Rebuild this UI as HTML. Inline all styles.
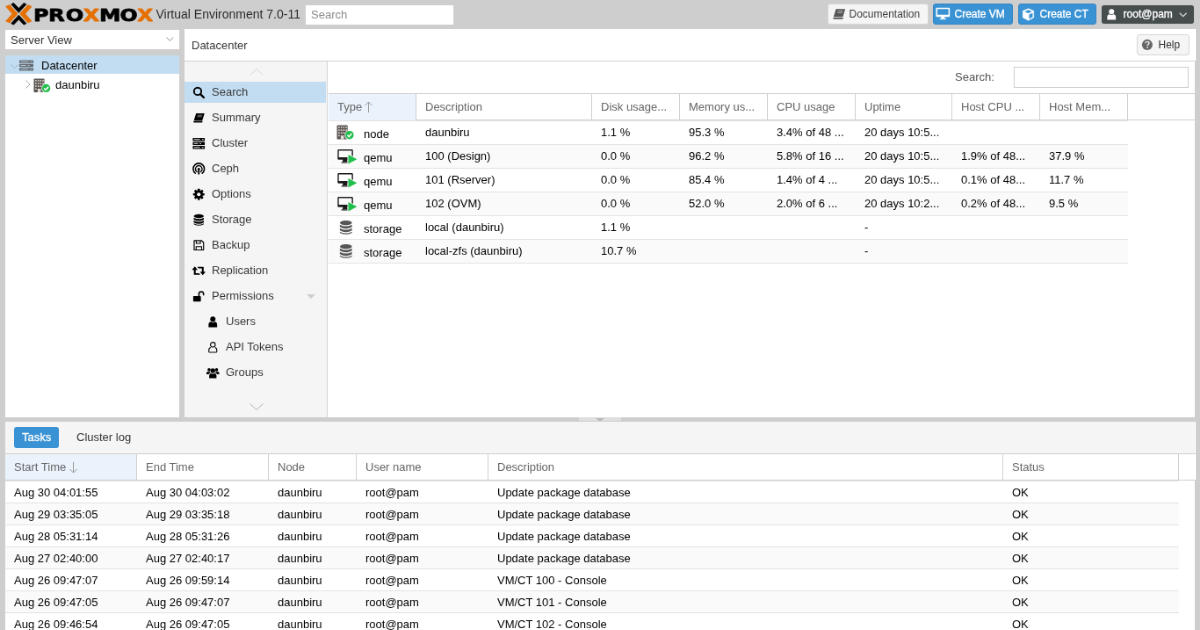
<!DOCTYPE html>
<html lang="en">
<head>
<meta charset="utf-8">
<title>daunbiru - Proxmox Virtual Environment</title>
<style>
*{box-sizing:border-box;margin:0;padding:0}
html,body{width:1200px;height:630px;overflow:hidden;background:#cecece}
body{font-family:"Liberation Sans",Arial,Helvetica,sans-serif;font-size:13px;color:#000}
#root{position:absolute;left:0;top:0;width:1366px;height:718px;transform:scale(0.87848);transform-origin:0 0;will-change:transform}
.abs{position:absolute}
svg{display:block;overflow:visible}
svg.ic{position:absolute}
#ver{left:177.5px;top:7px;font-size:14px;line-height:18px;color:#2b2b2b;white-space:nowrap}
#gsearch{left:347px;top:4.5px;width:170px;height:24px;border:1px solid #cfcfcf;background:#fff;color:#8a8a8a;line-height:22px;padding-left:6px}
.btn{position:absolute;top:4px;height:24px;border-radius:3px;border:1px solid #d8d8d8;background:#f5f5f5;color:#404040;line-height:22px;white-space:nowrap;font-size:12px}
.btn .ic{left:3.5px;top:2.5px}
.btn .tx{position:absolute;left:23.5px;top:0}
.btn.blue{background:#3892d4;border-color:#3586c4;color:#fff;-webkit-text-stroke:0.35px #fff}
.btn.dark{background:#464d4d;border-color:#c9caca;color:#fff;background-clip:padding-box;-webkit-text-stroke:0.35px #fff}
#viewsel{left:5px;top:33px;width:200px;height:24px;border:1px solid #cfcfcf;background:#fff;line-height:23px;padding-left:6px;color:#333}
#tree{left:5px;top:62px;width:200px;height:413.5px;border:1px solid #cfcfcf;background:#fff}
.trow{position:absolute;left:0;width:198px;height:21px;line-height:23px;white-space:nowrap}
.trow.sel{background:#c2ddf2}
.trow .tx{position:absolute;top:0}
#chead{left:210px;top:33px;width:1151px;height:36px;background:#fff;line-height:37px;padding-left:8px;color:#3a3a3a}
#cbody{left:209px;top:69px;width:1152px;height:406.5px;background:#fff;border:1px solid #cfcfcf}
#nav{left:0;top:0;width:163px;height:404.5px;background:#f5f5f5;border-right:1px solid #d6d6d6}
.nitem{position:absolute;left:0;width:161px;height:24px;line-height:24px;color:#3a3a3a;white-space:nowrap}
.nitem.sel{background:#c2ddf2}
.nitem .tx{position:absolute;left:31px;top:0}
.nitem.sub .tx{left:47px}
.nitem .ic{left:8.6px;top:5px}
.nitem.sub .ic{left:24.6px}
#ctb{left:164px;top:0;width:986px;height:36px;background:#fff}
.gh{position:absolute;height:30px;line-height:29px;color:#666;border-right:1px solid #d0d0d0;padding-left:10px;white-space:nowrap;overflow:hidden}
.gh.sorted{background:#eaf3fb}
.grow{position:absolute;left:0;height:27px;border-top:1px solid #e4e4e4;background:#fff}
.grow.last{border-bottom:1px solid #e4e4e4}
.grow.alt{background:#fafafa}
.gc{position:absolute;top:0;line-height:25px;white-space:nowrap}
#south{left:5px;top:479px;width:1356px;height:240px;background:#fff;border:1px solid #cfcfcf}
#stabs{left:0;top:0;width:1356px;height:36px;background:#f5f5f5}
.tab{position:absolute;top:6px;height:24px;line-height:24px;border-radius:3px;padding:0 9px;color:#333}
.tab.act{background:#3892d4;color:#fff;-webkit-text-stroke:0.3px #fff}
.sh{position:absolute;top:36px;height:31px;line-height:30px;color:#666;border-right:1px solid #d0d0d0;border-top:1px solid #d0d0d0;border-bottom:1px solid #d0d0d0;padding-left:10px;white-space:nowrap;background:#fff}
.sh.sorted{background:#eaf3fb}
.srow{position:absolute;left:0;width:1336px;height:25px;border-top:1px solid #e4e4e4;background:#fff}
.srow.alt{background:#fafafa}
.sc{position:absolute;top:0;line-height:25px;white-space:nowrap}
</style>
</head>
<body>
<div id="root">
<svg class="abs" style="left:0;top:0" width="227.67" height="34.15" viewBox="0 0 200 30">
<g fill="#e57000" stroke="#e57000" stroke-width="1" stroke-linejoin="round"><path d="M6.2 6.6L9.4 5.1L17.3 13.8L9.4 22.5L6.2 21L12.6 13.8Z"/><path d="M31.2 6.6L28 5.1L20.1 13.8L28 22.5L31.2 21L24.8 13.8Z"/></g>
<g fill="#000" stroke="#000" stroke-width="0.8" stroke-linejoin="round"><path d="M11.2 4.3L13.6 3L18.7 8.4L23.8 3L26.2 4.3L18.7 12.6Z"/><path d="M11.2 23.4L13.6 24.7L18.7 19.3L23.8 24.7L26.2 23.4L18.7 15.1Z"/></g>
<g font-family="'DejaVu Sans','Liberation Sans',sans-serif" font-weight="bold" font-size="17.6" stroke-width="0.7" stroke-linejoin="round"><text transform="translate(35.20,21) scale(1.192,1)" x="-1.58" y="0" fill="#000" stroke="#000">P</text><text transform="translate(50.20,21) scale(1.214,1)" x="-1.58" y="0" fill="#000" stroke="#000">R</text><text transform="translate(66.50,21) scale(1.204,1)" x="-0.70" y="0" fill="#000" stroke="#000">O</text><text transform="translate(83.50,21) scale(1.189,1)" x="-0.18" y="0" fill="#e57000" stroke="#e57000">X</text><text transform="translate(101.20,21) scale(1.226,1)" x="-1.58" y="0" fill="#000" stroke="#000">M</text><text transform="translate(120.80,21) scale(1.181,1)" x="-0.70" y="0" fill="#000" stroke="#000">O</text><text transform="translate(137.50,21) scale(1.159,1)" x="-0.18" y="0" fill="#e57000" stroke="#e57000">X</text></g>
</svg><div id="ver" class="abs">Virtual Environment 7.0-11</div>
<div id="gsearch" class="abs">Search</div>
<div class="btn" style="left:942px;width:115px"><svg class="ic" style="" width="16" height="16" viewBox="0 0 16 16"><path d="M4.6 2.2H15.2L12.4 11.2H1.8Z M3.2 11.9H12.9L12.3 13.8H2.2Q0.8 13.6 1.2 12.2Z" fill="#555"/><path d="M6.6 4.6H12.4M6 6.4H11.8" stroke="#f5f5f5" stroke-width="0.55"/></svg><span class="tx">Documentation</span></div>
<div class="btn blue" style="left:1062px;width:91px"><svg class="ic" style="left:2.2px;top:1.8px" width="16.6" height="16.6" viewBox="0 0 16 16"><path d="M1.2 1.8H14.8Q15.6 1.8 15.6 2.6V11Q15.6 11.8 14.8 11.8H1.2Q0.4 11.8 0.4 11V2.6Q0.4 1.8 1.2 1.8ZM1.9 3.2V9.4H14.1V3.2Z M6.2 11.8H9.8L10.4 13.8H5.6Z M4.6 13.6H11.4V14.8H4.6Z" fill="#fff" fill-rule="evenodd"/></svg><span class="tx">Create VM</span></div>
<div class="btn blue" style="left:1159px;width:89px"><svg class="ic" style="left:2.8px;top:3.5px" width="15" height="15" viewBox="0 0 16 16"><path d="M8 0.8L14.6 3.6V11.6L8 15.2L1.4 11.6V3.6Z" fill="#fff" stroke="#fff" stroke-width="0.6" stroke-linejoin="round"/><path d="M8 2.5L12.4 4.4L8 6.3L3.6 4.4Z" fill="#3892d4"/><path d="M9 8L13.3 6.1V10.8L9 13.2Z" fill="#3892d4"/></svg><span class="tx">Create CT</span></div>
<div class="btn dark" style="left:1253px;width:107px;top:4.5px;height:23.5px"><svg class="ic" style="left:4.2px;top:3px" width="14.5" height="14.5" viewBox="0 0 16 16"><g fill="#fff"><circle cx="8" cy="4.6" r="3.3"/><path d="M2.6 14.6V11.8Q2.6 8.3 5.6 7.9Q8 9.6 10.4 7.9Q13.4 8.3 13.4 11.8V14.6Q13.4 15 12.4 15H3.6Q2.6 15 2.6 14.6Z"/></g></svg><span class="tx" style="left:24.6px;top:-0.5px">root@pam</span><svg class="abs" style="left:88px;top:8.5px" width="9.4" height="6" viewBox="0 0 9.4 6"><path d="M0.7 0.7L4.7 4.7L8.7 0.7" fill="none" stroke="#d4d8d8" stroke-width="1.3"/></svg></div>
<div id="viewsel" class="abs">Server View<svg class="abs" style="left:182.5px;top:8px" width="8.6" height="6" viewBox="0 0 8.6 6"><path d="M0.5 0.5L4.3 4.5L8.1 0.5" fill="none" stroke="#8f8f8f" stroke-width="1"/></svg></div>
<div id="tree" class="abs">
 <div class="trow sel" style="top:0"><svg class="abs" style="left:5.5px;top:10px" width="9" height="6" viewBox="0 0 9 6"><path d="M0.5 0.5L4.5 4.5L8.5 0.5" fill="none" stroke="#a4b3bf" stroke-width="1"/></svg><svg class="ic" style="left:16px;top:4.5px" width="16" height="13" viewBox="0 0 16 16" preserveAspectRatio="none"><g fill="#5f6870"><rect x="0" y="0.5" width="16" height="4.2" rx="0.8"/><rect x="0" y="5.9" width="16" height="4.2" rx="0.8"/><rect x="0" y="11.3" width="16" height="4.2" rx="0.8"/></g><g fill="#c9d3db"><rect x="1.5" y="2.1" width="9" height="1"/><rect x="1.5" y="7.5" width="6" height="1"/><rect x="1.5" y="12.9" width="9" height="1"/><rect x="12.5" y="2.1" width="2" height="1"/><rect x="9.5" y="7.5" width="2" height="1"/><rect x="12.5" y="12.9" width="2" height="1"/></g></svg><span class="tx" style="left:41px">Datacenter</span></div>
 <div class="trow" style="top:22px"><svg class="abs" style="left:23px;top:6px" width="6" height="10" viewBox="0 0 6 10"><path d="M0.5 0.5L5 5L0.5 9.5" fill="none" stroke="#a8a8a8" stroke-width="1"/></svg><svg class="ic" style="left:31.5px;top:4px" width="20.8" height="17.68" viewBox="0 0 20 17"><rect x="0.5" y="0.5" width="11.5" height="15" rx="0.7" fill="#5a5452"/><g fill="#e4ddd6"><rect x="2" y="2" width="1.5" height="1.5"/><rect x="4.6" y="2" width="1.5" height="1.5"/><rect x="7.2" y="2" width="1.5" height="1.5"/><rect x="9.8" y="2" width="1.5" height="1.5"/><rect x="2" y="5" width="1.5" height="1.5"/><rect x="4.6" y="5" width="1.5" height="1.5"/><rect x="7.2" y="5" width="1.5" height="1.5"/><rect x="9.8" y="5" width="1.5" height="1.5"/><rect x="2" y="8" width="1.5" height="1.5"/><rect x="4.6" y="8" width="1.5" height="1.5"/><rect x="7.2" y="8" width="1.5" height="1.5"/><rect x="9.8" y="8" width="1.5" height="1.5"/><rect x="2" y="11" width="1.5" height="1.5"/><rect x="9.8" y="11" width="1.5" height="1.5"/><rect x="4.6" y="11.5" width="3.4" height="4"/></g><circle cx="14" cy="11" r="5.2" fill="#fff"/><circle cx="14" cy="11" r="4.5" fill="#21bf4b"/><path d="M11.7 11.1L13.4 12.8L16.4 9.5" fill="none" stroke="#fff" stroke-width="1.5"/></svg><span class="tx" style="left:57px">daunbiru</span></div>
</div>
<div id="chead" class="abs">Datacenter
 <div class="btn" style="left:1084px;top:6px;width:60px;color:#2e2e2e"><svg class="ic" style="left:3.8px;top:3.8px" width="13.8" height="13.8" viewBox="0 0 16 16"><circle cx="8" cy="8" r="7" fill="#666"/><path d="M5.7 6.1Q5.9 3.9 8.1 3.9Q10.4 3.9 10.4 5.9Q10.4 7 9.2 7.7Q8.2 8.3 8.2 9.4" fill="none" stroke="#f5f5f5" stroke-width="1.7"/><rect x="7.3" y="10.5" width="1.8" height="1.8" fill="#f5f5f5"/></svg><span class="tx">Help</span></div>
</div>
<div id="cbody" class="abs">
 <div id="nav" class="abs">
  <svg class="abs" style="left:74px;top:8px" width="16" height="8" viewBox="0 0 16 8"><path d="M0.5 7.5L8 0.5L15.5 7.5" fill="none" stroke="#d9d9d9" stroke-width="1"/></svg>
  <div class="nitem sel" style="top:23.25px"><svg class="ic" style="" width="14.5" height="14.5" viewBox="0 0 16 16"><circle cx="6.6" cy="6.6" r="4.6" fill="none" stroke="#000" stroke-width="2.1"/><path d="M10 10L14.3 14.3" stroke="#000" stroke-width="2.6" stroke-linecap="round"/></svg><span class="tx">Search</span></div>
  <div class="nitem" style="top:52.25px"><svg class="ic" style="" width="14.5" height="14.5" viewBox="0 0 16 16"><path d="M4.6 2.2H15.2L12.4 11.2H1.8Z M3.2 11.9H12.9L12.3 13.8H2.2Q0.8 13.6 1.2 12.2Z" fill="#000"/><path d="M6.6 4.6H12.4M6 6.4H11.8" stroke="#f5f5f5" stroke-width="0.55"/></svg><span class="tx">Summary</span></div>
  <div class="nitem" style="top:81.25px"><svg class="ic" style="" width="14.5" height="14.5" viewBox="0 0 16 16"><g fill="#000"><rect x="0.5" y="1" width="15" height="4" rx="0.7"/><rect x="0.5" y="6" width="15" height="4" rx="0.7"/><rect x="0.5" y="11" width="15" height="4" rx="0.7"/></g><g fill="#f5f5f5"><rect x="2" y="2.5" width="7.5" height="1"/><rect x="2" y="7.5" width="5" height="1"/><rect x="2" y="12.5" width="7.5" height="1"/><rect x="12" y="2.5" width="2" height="1"/><rect x="9" y="7.5" width="2" height="1"/><rect x="12" y="12.5" width="2" height="1"/></g></svg><span class="tx">Cluster</span></div>
  <div class="nitem" style="top:110.25px"><svg class="ic" style="" width="14.5" height="14.5" viewBox="0 0 16 16"><g fill="none" stroke="#000" stroke-linecap="round"><path d="M3.6 13.4A7 7 0 1 1 12.4 13.4" stroke-width="1.7"/><path d="M5.6 11.6A4.2 4.2 0 1 1 10.4 11.6" stroke-width="1.6"/><path d="M8 8.3V14.2" stroke-width="2"/></g><circle cx="8" cy="8.2" r="1.5" fill="#000"/></svg><span class="tx">Ceph</span></div>
  <div class="nitem" style="top:139.25px"><svg class="ic" style="" width="14.5" height="14.5" viewBox="0 0 16 16"><g fill="#000"><rect x="6.6" y="0.9" width="2.8" height="14.2" rx="0.5" transform="rotate(0 8 8)"/><rect x="6.6" y="0.9" width="2.8" height="14.2" rx="0.5" transform="rotate(45 8 8)"/><rect x="6.6" y="0.9" width="2.8" height="14.2" rx="0.5" transform="rotate(90 8 8)"/><rect x="6.6" y="0.9" width="2.8" height="14.2" rx="0.5" transform="rotate(135 8 8)"/><circle cx="8" cy="8" r="5.3"/></g><circle cx="8" cy="8" r="2.3" fill="#f5f5f5"/></svg><span class="tx">Options</span></div>
  <div class="nitem" style="top:168.25px"><svg class="ic" style="" width="14.5" height="14.5" viewBox="0 0 16 16"><g fill="#000"><ellipse cx="8" cy="3.3" rx="6.3" ry="2.5"/><path d="M1.7 5.2Q8 8.6 14.3 5.2V7.6Q8 11 1.7 7.6Z"/><path d="M1.7 8.9Q8 12.3 14.3 8.9V11.3Q8 14.7 1.7 11.3Z"/><path d="M1.7 12.5Q8 15.9 14.3 12.5V13.6Q8 17 1.7 13.6Z"/></g></svg><span class="tx">Storage</span></div>
  <div class="nitem" style="top:197.25px"><svg class="ic" style="" width="14.5" height="14.5" viewBox="0 0 16 16"><path d="M2.2 2H11.6L14 4.4V13.8H2.2Z" fill="none" stroke="#000" stroke-width="1.3" stroke-linejoin="round"/><path d="M4.8 2.2V5.6H10V2.2M4.6 13.6V9.6H11.6V13.6" fill="none" stroke="#000" stroke-width="1.2"/></svg><span class="tx">Backup</span></div>
  <div class="nitem" style="top:226.25px"><svg class="ic" style="left:7.6px;top:4px" width="16.5" height="16.5" viewBox="0 0 16 16"><g fill="#000"><path d="M3.6 3.2L0.4 7H2.6V12.4H9.8L8.2 10.6H4.6V7H6.8Z"/><path d="M12.4 12.8L15.6 9H13.4V3.6H6.2L7.8 5.4H11.4V9H9.2Z"/></g></svg><span class="tx">Replication</span></div>
  <div class="nitem" style="top:255.25px"><svg class="ic" style="" width="14.5" height="14.5" viewBox="0 0 16 16"><rect x="1" y="7.6" width="9.6" height="7" rx="0.9" fill="#000"/><path d="M8.2 7.8V5.2A2.9 2.9 0 0 1 14 5.2V7" fill="none" stroke="#000" stroke-width="1.7"/></svg><span class="tx">Permissions</span></div>
  <div class="nitem sub" style="top:284.25px"><svg class="ic" style="" width="14.5" height="14.5" viewBox="0 0 16 16"><g fill="#000"><circle cx="8" cy="4.6" r="3.3"/><path d="M2.6 14.6V11.8Q2.6 8.3 5.6 7.9Q8 9.6 10.4 7.9Q13.4 8.3 13.4 11.8V14.6Q13.4 15 12.4 15H3.6Q2.6 15 2.6 14.6Z"/></g></svg><span class="tx">Users</span></div>
  <div class="nitem sub" style="top:313.25px"><svg class="ic" style="" width="14.5" height="14.5" viewBox="0 0 16 16"><g fill="none" stroke="#000" stroke-width="1.2"><circle cx="8" cy="4.8" r="3"/><path d="M5.4 8.2Q3 8.8 3 11.8V13.4Q3 14.4 4 14.4H12Q13 14.4 13 13.4V11.8Q13 8.8 10.6 8.2"/></g></svg><span class="tx">API Tokens</span></div>
  <div class="nitem sub" style="top:342.25px"><svg class="ic" style="" width="14.5" height="14.5" viewBox="0 0 16 16"><g fill="#000"><circle cx="8" cy="5.4" r="2.9"/><path d="M3.4 14.8V12.4Q3.4 9 6 8.7Q8 10.2 10 8.7Q12.6 9 12.6 12.4V14.8Z"/><circle cx="3.3" cy="4.3" r="2"/><circle cx="12.7" cy="4.3" r="2"/><path d="M0 10V8.6Q0 6.6 1.8 6.5Q3 7.3 4.4 6.9Q4.6 8 5.2 8.3Q3.2 8.8 2.8 10Z"/><path d="M16 10V8.6Q16 6.6 14.2 6.5Q13 7.3 11.6 6.9Q11.4 8 10.8 8.3Q12.8 8.8 13.2 10Z"/></g></svg><span class="tx">Groups</span></div>
  <svg class="abs" style="left:138.5px;top:265px" width="10" height="5" viewBox="0 0 10 5"><path d="M0 0H10L5 5Z" fill="#cfcfcf"/></svg>
  <svg class="abs" style="left:74px;top:389px" width="16" height="8" viewBox="0 0 16 8"><path d="M0.5 0.5L8 7.5L15.5 0.5" fill="none" stroke="#b4b4b4" stroke-width="1"/></svg>
 </div>
 <div id="ctb" class="abs"><span class="abs" style="left:713px;top:0;line-height:36px;color:#555">Search:</span><div class="abs" style="left:780px;top:6px;width:199px;height:24px;border:1px solid #cfcfcf;background:#fff"></div></div>
 <div class="abs" style="left:164px;top:36px;width:986px;height:31px;border-top:1px solid #d0d0d0;border-bottom:1px solid #d0d0d0"></div>
  <div class="gh sorted" style="left:164px;top:37px;width:100px">Type<svg class="abs" style="left:41px;top:8px" width="9" height="13" viewBox="0 0 9 13"><path d="M4.5 13V1M0.5 5L4.5 1L8.5 5" fill="none" stroke="#999" stroke-width="1"/></svg></div>
  <div class="gh" style="left:264px;top:37px;width:200px">Description</div>
  <div class="gh" style="left:464px;top:37px;width:100px">Disk usage...</div>
  <div class="gh" style="left:564px;top:37px;width:100px">Memory us...</div>
  <div class="gh" style="left:664px;top:37px;width:100px">CPU usage</div>
  <div class="gh" style="left:764px;top:37px;width:110px">Uptime</div>
  <div class="gh" style="left:874px;top:37px;width:100px">Host CPU ...</div>
  <div class="gh" style="left:974px;top:37px;width:100px">Host Mem...</div>
  <div class="grow" style="top:67px;left:164px;width:910px;height:27px"><svg class="ic" style="left:9.2px;top:4.3px" width="21.2" height="18.02" viewBox="0 0 20 17"><rect x="0.5" y="0.5" width="11.5" height="15" rx="0.7" fill="#5a5452"/><g fill="#e4ddd6"><rect x="2" y="2" width="1.5" height="1.5"/><rect x="4.6" y="2" width="1.5" height="1.5"/><rect x="7.2" y="2" width="1.5" height="1.5"/><rect x="9.8" y="2" width="1.5" height="1.5"/><rect x="2" y="5" width="1.5" height="1.5"/><rect x="4.6" y="5" width="1.5" height="1.5"/><rect x="7.2" y="5" width="1.5" height="1.5"/><rect x="9.8" y="5" width="1.5" height="1.5"/><rect x="2" y="8" width="1.5" height="1.5"/><rect x="4.6" y="8" width="1.5" height="1.5"/><rect x="7.2" y="8" width="1.5" height="1.5"/><rect x="9.8" y="8" width="1.5" height="1.5"/><rect x="2" y="11" width="1.5" height="1.5"/><rect x="9.8" y="11" width="1.5" height="1.5"/><rect x="4.6" y="11.5" width="3.4" height="4"/></g><circle cx="14" cy="11" r="5.2" fill="#fff"/><circle cx="14" cy="11" r="4.5" fill="#21bf4b"/><path d="M11.7 11.1L13.4 12.8L16.4 9.5" fill="none" stroke="#fff" stroke-width="1.5"/></svg><span class="gc" style="left:40px;top:1.5px">node</span><span class="gc" style="left:110px">daunbiru</span><span class="gc" style="left:310px">1.1 %</span><span class="gc" style="left:410px">95.3 %</span><span class="gc" style="left:510px">3.4% of 48 ...</span><span class="gc" style="left:610px">20 days 10:5...</span></div>
  <div class="grow alt" style="top:94px;left:164px;width:910px;height:27px"><svg class="ic" style="left:9.5px;top:3.5px" width="24.2" height="19.8" viewBox="0 0 22 18"><path d="M1.4 1H15Q16.2 1 16.2 2.2V10.4Q16.2 11.6 15 11.6H1.4Q0.2 11.6 0.2 10.4V2.2Q0.2 1 1.4 1ZM1.5 2.2V9.2H14.9V2.2Z M5.8 11.6H10.2L10.8 14H5.2Z M4.2 13.8H11.8V14.9H4.2Z" fill="#1b1b1b" fill-rule="evenodd"/><path d="M11.3 6.3L20.4 11.1L11.3 15.9Z" fill="#fff" stroke="#fff" stroke-width="1.6" stroke-linejoin="round"/><path d="M11.3 6.3L20.4 11.1L11.3 15.9Z" fill="#21bf4b"/></svg><span class="gc" style="left:40px;top:1.5px">qemu</span><span class="gc" style="left:110px">100 (Design)</span><span class="gc" style="left:310px">0.0 %</span><span class="gc" style="left:410px">96.2 %</span><span class="gc" style="left:510px">5.8% of 16 ...</span><span class="gc" style="left:610px">20 days 10:5...</span><span class="gc" style="left:720px">1.9% of 48...</span><span class="gc" style="left:820px">37.9 %</span></div>
  <div class="grow" style="top:121px;left:164px;width:910px;height:27px"><svg class="ic" style="left:9.5px;top:3.5px" width="24.2" height="19.8" viewBox="0 0 22 18"><path d="M1.4 1H15Q16.2 1 16.2 2.2V10.4Q16.2 11.6 15 11.6H1.4Q0.2 11.6 0.2 10.4V2.2Q0.2 1 1.4 1ZM1.5 2.2V9.2H14.9V2.2Z M5.8 11.6H10.2L10.8 14H5.2Z M4.2 13.8H11.8V14.9H4.2Z" fill="#1b1b1b" fill-rule="evenodd"/><path d="M11.3 6.3L20.4 11.1L11.3 15.9Z" fill="#fff" stroke="#fff" stroke-width="1.6" stroke-linejoin="round"/><path d="M11.3 6.3L20.4 11.1L11.3 15.9Z" fill="#21bf4b"/></svg><span class="gc" style="left:40px;top:1.5px">qemu</span><span class="gc" style="left:110px">101 (Rserver)</span><span class="gc" style="left:310px">0.0 %</span><span class="gc" style="left:410px">85.4 %</span><span class="gc" style="left:510px">1.4% of 4 ...</span><span class="gc" style="left:610px">20 days 10:5...</span><span class="gc" style="left:720px">0.1% of 48...</span><span class="gc" style="left:820px">11.7 %</span></div>
  <div class="grow alt" style="top:148px;left:164px;width:910px;height:27px"><svg class="ic" style="left:9.5px;top:3.5px" width="24.2" height="19.8" viewBox="0 0 22 18"><path d="M1.4 1H15Q16.2 1 16.2 2.2V10.4Q16.2 11.6 15 11.6H1.4Q0.2 11.6 0.2 10.4V2.2Q0.2 1 1.4 1ZM1.5 2.2V9.2H14.9V2.2Z M5.8 11.6H10.2L10.8 14H5.2Z M4.2 13.8H11.8V14.9H4.2Z" fill="#1b1b1b" fill-rule="evenodd"/><path d="M11.3 6.3L20.4 11.1L11.3 15.9Z" fill="#fff" stroke="#fff" stroke-width="1.6" stroke-linejoin="round"/><path d="M11.3 6.3L20.4 11.1L11.3 15.9Z" fill="#21bf4b"/></svg><span class="gc" style="left:40px;top:1.5px">qemu</span><span class="gc" style="left:110px">102 (OVM)</span><span class="gc" style="left:310px">0.0 %</span><span class="gc" style="left:410px">52.0 %</span><span class="gc" style="left:510px">2.0% of 6 ...</span><span class="gc" style="left:610px">20 days 10:2...</span><span class="gc" style="left:720px">0.2% of 48...</span><span class="gc" style="left:820px">9.5 %</span></div>
  <div class="grow" style="top:175px;left:164px;width:910px;height:27px"><svg class="ic" style="left:10.5px;top:4px" width="17.5" height="17.5" viewBox="0 0 16 16"><g fill="#555"><ellipse cx="8" cy="3.3" rx="6.3" ry="2.5"/><path d="M1.7 5.2Q8 8.6 14.3 5.2V7.6Q8 11 1.7 7.6Z"/><path d="M1.7 8.9Q8 12.3 14.3 8.9V11.3Q8 14.7 1.7 11.3Z"/><path d="M1.7 12.5Q8 15.9 14.3 12.5V13.6Q8 17 1.7 13.6Z"/></g></svg><span class="gc" style="left:40px;top:1.5px">storage</span><span class="gc" style="left:110px">local (daunbiru)</span><span class="gc" style="left:310px">1.1 %</span><span class="gc" style="left:610px">-</span></div>
  <div class="grow alt last" style="top:202px;left:164px;width:910px;height:28px"><svg class="ic" style="left:10.5px;top:4px" width="17.5" height="17.5" viewBox="0 0 16 16"><g fill="#555"><ellipse cx="8" cy="3.3" rx="6.3" ry="2.5"/><path d="M1.7 5.2Q8 8.6 14.3 5.2V7.6Q8 11 1.7 7.6Z"/><path d="M1.7 8.9Q8 12.3 14.3 8.9V11.3Q8 14.7 1.7 11.3Z"/><path d="M1.7 12.5Q8 15.9 14.3 12.5V13.6Q8 17 1.7 13.6Z"/></g></svg><span class="gc" style="left:40px;top:1.5px">storage</span><span class="gc" style="left:110px">local-zfs (daunbiru)</span><span class="gc" style="left:310px">10.7 %</span><span class="gc" style="left:610px">-</span></div>
</div>
<div class="abs" style="left:659px;top:475px;width:48px;height:5px;background:#dedede"><svg class="abs" style="left:19px;top:0.5px" width="10" height="4" viewBox="0 0 10 4"><path d="M0 0H10L5 4Z" fill="#b9b9b9"/></svg></div>
<div id="south" class="abs">
 <div id="stabs" class="abs"><span class="tab act" style="left:10px">Tasks</span><span class="tab" style="left:72px">Cluster log</span></div>
 <div class="abs" style="left:0;top:36px;width:1356px;height:31px;border-top:1px solid #d0d0d0;border-bottom:1px solid #d0d0d0;background:#fff"></div>
 <div class="sh sorted" style="left:0px;width:150px">Start Time<svg class="abs" style="left:73px;top:9px" width="9" height="13" viewBox="0 0 9 13"><path d="M4.5 0V12M0.5 8L4.5 12L8.5 8" fill="none" stroke="#999" stroke-width="1"/></svg></div>
 <div class="sh" style="left:150px;width:150px">End Time</div>
 <div class="sh" style="left:300px;width:100px">Node</div>
 <div class="sh" style="left:400px;width:150px">User name</div>
 <div class="sh" style="left:550px;width:586px">Description</div>
 <div class="sh" style="left:1136px;width:200px">Status</div>
 <div class="srow" style="top:67px;height:25px"><span class="sc" style="left:10px">Aug 30 04:01:55</span><span class="sc" style="left:160px">Aug 30 04:03:02</span><span class="sc" style="left:310px">daunbiru</span><span class="sc" style="left:410px">root@pam</span><span class="sc" style="left:560px">Update package database</span><span class="sc" style="left:1146px">OK</span></div>
 <div class="srow alt" style="top:92px;height:25px"><span class="sc" style="left:10px">Aug 29 03:35:05</span><span class="sc" style="left:160px">Aug 29 03:35:18</span><span class="sc" style="left:310px">daunbiru</span><span class="sc" style="left:410px">root@pam</span><span class="sc" style="left:560px">Update package database</span><span class="sc" style="left:1146px">OK</span></div>
 <div class="srow" style="top:117px;height:25px"><span class="sc" style="left:10px">Aug 28 05:31:14</span><span class="sc" style="left:160px">Aug 28 05:31:26</span><span class="sc" style="left:310px">daunbiru</span><span class="sc" style="left:410px">root@pam</span><span class="sc" style="left:560px">Update package database</span><span class="sc" style="left:1146px">OK</span></div>
 <div class="srow alt" style="top:142px;height:25px"><span class="sc" style="left:10px">Aug 27 02:40:00</span><span class="sc" style="left:160px">Aug 27 02:40:17</span><span class="sc" style="left:310px">daunbiru</span><span class="sc" style="left:410px">root@pam</span><span class="sc" style="left:560px">Update package database</span><span class="sc" style="left:1146px">OK</span></div>
 <div class="srow" style="top:167px;height:25px"><span class="sc" style="left:10px">Aug 26 09:47:07</span><span class="sc" style="left:160px">Aug 26 09:59:14</span><span class="sc" style="left:310px">daunbiru</span><span class="sc" style="left:410px">root@pam</span><span class="sc" style="left:560px">VM/CT 100 - Console</span><span class="sc" style="left:1146px">OK</span></div>
 <div class="srow alt" style="top:192px;height:25px"><span class="sc" style="left:10px">Aug 26 09:47:05</span><span class="sc" style="left:160px">Aug 26 09:47:07</span><span class="sc" style="left:310px">daunbiru</span><span class="sc" style="left:410px">root@pam</span><span class="sc" style="left:560px">VM/CT 101 - Console</span><span class="sc" style="left:1146px">OK</span></div>
 <div class="srow" style="top:217px;height:25px"><span class="sc" style="left:10px">Aug 26 09:46:54</span><span class="sc" style="left:160px">Aug 26 09:47:05</span><span class="sc" style="left:310px">daunbiru</span><span class="sc" style="left:410px">root@pam</span><span class="sc" style="left:560px">VM/CT 102 - Console</span><span class="sc" style="left:1146px">OK</span></div>
</div>
</div>
</body>
</html>
